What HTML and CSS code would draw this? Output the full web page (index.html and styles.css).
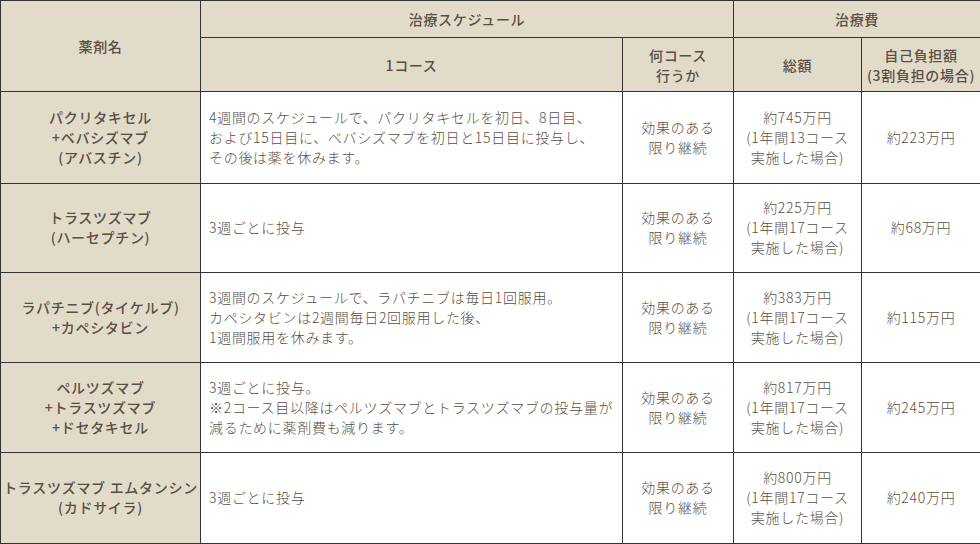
FILE: index.html
```html
<!DOCTYPE html>
<html lang="ja">
<head>
<meta charset="utf-8">
<link rel="stylesheet" href="styles.css">
</head>
<body>
<table class="cost">
  <colgroup>
    <col class="c-name">
    <col class="c-course">
    <col class="c-count">
    <col class="c-total">
    <col class="c-self">
  </colgroup>
  <thead>
    <tr class="h1">
      <th rowspan="2">薬剤名</th>
      <th colspan="2">治療スケジュール</th>
      <th colspan="2">治療費</th>
    </tr>
    <tr class="h2">
      <th>1コース</th>
      <th>何コース<br>行うか</th>
      <th>総額</th>
      <th>自己負担額<br>(3割負担の場合)</th>
    </tr>
  </thead>
  <tbody>
    <tr>
      <th>パクリタキセル<br>+ベバシズマブ<br>(アバスチン)</th>
      <td class="left">4週間のスケジュールで、パクリタキセルを初日、8日目、<br>および15日目に、ベバシズマブを初日と15日目に投与し、<br>その後は薬を休みます。</td>
      <td>効果のある<br>限り継続</td>
      <td>約745万円<br>(1年間13コース<br>実施した場合)</td>
      <td>約223万円</td>
    </tr>
    <tr>
      <th>トラスツズマブ<br>(ハーセプチン)</th>
      <td class="left">3週ごとに投与</td>
      <td>効果のある<br>限り継続</td>
      <td>約225万円<br>(1年間17コース<br>実施した場合)</td>
      <td>約68万円</td>
    </tr>
    <tr>
      <th>ラパチニブ(タイケルブ)<br>+カペシタビン</th>
      <td class="left">3週間のスケジュールで、ラパチニブは毎日1回服用。<br>カペシタビンは2週間毎日2回服用した後、<br>1週間服用を休みます。</td>
      <td>効果のある<br>限り継続</td>
      <td>約383万円<br>(1年間17コース<br>実施した場合)</td>
      <td>約115万円</td>
    </tr>
    <tr>
      <th>ペルツズマブ<br>+トラスツズマブ<br>+ドセタキセル</th>
      <td class="left">3週ごとに投与。<br>※2コース目以降はペルツズマブとトラスツズマブの投与量が<br>減るために薬剤費も減ります。</td>
      <td>効果のある<br>限り継続</td>
      <td>約817万円<br>(1年間17コース<br>実施した場合)</td>
      <td>約245万円</td>
    </tr>
    <tr>
      <th>トラスツズマブ エムタンシン<br>(カドサイラ)</th>
      <td class="left">3週ごとに投与</td>
      <td>効果のある<br>限り継続</td>
      <td>約800万円<br>(1年間17コース<br>実施した場合)</td>
      <td>約240万円</td>
    </tr>
  </tbody>
</table>
</body>
</html>
```

FILE: styles.css
```css
html, body {
  margin: 0;
  padding: 0;
  background: #ffffff;
}

.cost {
  width: 980px;
  table-layout: fixed;
  border-collapse: collapse;
  font-family: "Noto Sans CJK JP", "Noto Sans", sans-serif;
  font-size: 14px;
  line-height: 20px;
  letter-spacing: 0.05em;
  color: #594f45;
}

.c-name { width: 200px; }
.c-course { width: 422px; }
.c-count { width: 111px; }
.c-total { width: 128px; }
.c-self { width: 119px; }

.cost th,
.cost td {
  border: 1px solid #333333;
  text-align: center;
  vertical-align: middle;
  padding: 0 4px 2px;
}

.cost th {
  background: #e3dbca;
  font-weight: 500;
  white-space: nowrap;
  padding: 0 1px 2px;
}

.cost thead th {
  padding-bottom: 0;
}

.cost td {
  background: #ffffff;
  font-weight: 300;
}

.cost td.left {
  text-align: left;
  padding-left: 8px;
}

.h1 { height: 37px; }
.h2 { height: 54px; }
.cost tbody tr { height: 90px; }
.cost tbody tr:first-child { height: 92px; }
.cost tbody tr:nth-child(2) { height: 89px; }
.cost tbody tr:last-child { height: 91px; }
```
